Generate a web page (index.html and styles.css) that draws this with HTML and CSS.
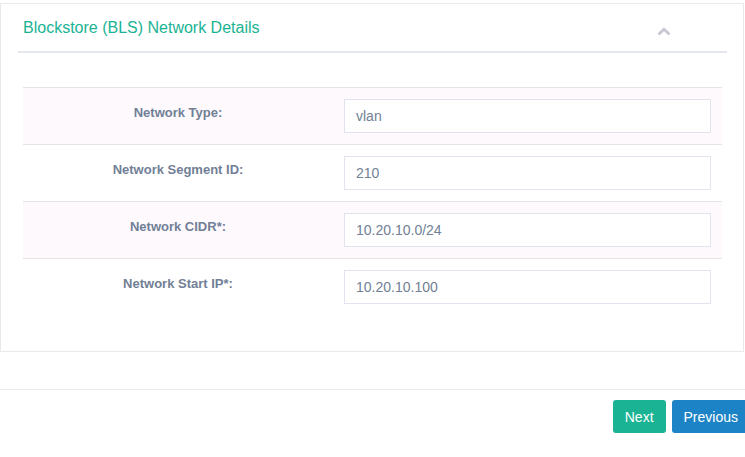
FILE: index.html
```html
<!DOCTYPE html>
<html>
<head>
<meta charset="utf-8">
<link rel="stylesheet" href="styles.css">
</head>
<body>
<div class="page">
  <section class="panel">
    <div class="panel-head">
      <h2 class="panel-title">Blockstore (BLS) Network Details</h2>
      <svg class="chevron" width="14" height="9" viewBox="0 0 14 9"><path d="M1.5 7.5 L7 2.2 L12.5 7.5" fill="none" stroke="#c6c9d0" stroke-width="2.8"/></svg>
    </div>
    <table class="details">
      <tr class="odd">
        <th>Network Type:</th>
        <td><div class="field">vlan</div></td>
      </tr>
      <tr>
        <th>Network Segment ID:</th>
        <td><div class="field">210</div></td>
      </tr>
      <tr class="odd">
        <th>Network CIDR*:</th>
        <td><div class="field">10.20.10.0/24</div></td>
      </tr>
      <tr>
        <th>Network Start IP*:</th>
        <td><div class="field">10.20.10.100</div></td>
      </tr>
    </table>
  </section>
  <footer class="actions">
    <button class="btn btn-next">Next</button>
    <button class="btn btn-prev">Previous</button>
  </footer>
</div>
</body>
</html>
```
FILE: styles.css
```css
html, body {
  margin: 0;
  padding: 0;
  overflow: hidden;
  background: #ffffff;
}
body {
  font-family: "Liberation Sans", Arial, sans-serif;
  color: #718096;
}
.page {
  width: 745px;
  padding-top: 3px;
}
.panel {
  width: 742px;
  border: 1px solid #e7eaec;
  padding-bottom: 36px;
}
.panel-head {
  display: flex;
  align-items: center;
  margin: 0 16px 0 17px;
  padding: 14px 0 13px 5px;
  border-bottom: 2px solid #e4e7eb;
}
.panel-title {
  flex: 1;
  margin: 0;
  font-size: 16px;
  line-height: 20px;
  font-weight: normal;
  color: #1ab394;
}
.chevron {
  display: block;
  margin: 6px 56px 0 0;
}
.details {
  margin: 34px 21px 0 22px;
  width: 699px;
  border-collapse: collapse;
}
.details tr {
  border-top: 1px solid #e4e4e6;
}
.details tr.odd {
  background: #fdf9fd;
}
.details th {
  width: 310px;
  padding: 0 0 7px 0;
  font-size: 13px;
  font-weight: bold;
  color: #718096;
  text-align: center;
  vertical-align: middle;
}
.details td {
  padding: 11px 11px 11px 11px;
}
.field {
  height: 32px;
  border: 1px solid #e1e3ee;
  background: #ffffff;
  padding: 0 11px;
  font-size: 14px;
  line-height: 32px;
  color: #718096;
}
.actions {
  margin-top: 37px;
  border-top: 1px solid #e7eaec;
  padding-top: 10px;
  display: flex;
  justify-content: flex-end;
  gap: 6px;
  margin-right: -5px;
}
.btn {
  height: 33px;
  padding: 0 12px;
  border: none;
  border-radius: 3px;
  font-family: "Liberation Sans", Arial, sans-serif;
  font-size: 14px;
  color: #ffffff;
}
.btn-next {
  background: #1ab394;
}
.btn-prev {
  background: #1c84c6;
}
```
